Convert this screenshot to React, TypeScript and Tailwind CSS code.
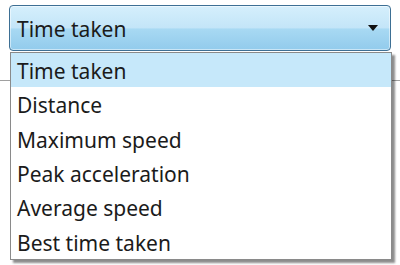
const items = ['Time taken', 'Distance', 'Maximum speed', 'Peak acceleration', 'Average speed', 'Best time taken'];

export default function App() {
  return (
    <div
      className="relative h-[265px] w-[400px] overflow-hidden bg-white text-[21px] text-[#1b1b1b]"
      style={{ fontFamily: '"Noto Sans", "Open Sans", sans-serif' }}
    >
      {/* faint separator behind the popup */}
      <div className="absolute left-0 right-0 top-[80px] h-px bg-[#a0a0a0]" />

      <div className="relative px-[9px] pt-[5px]">
        <div className="flex h-[46px] items-center justify-between rounded-[4px] border border-[#3d6f94] bg-[linear-gradient(to_bottom,#d5effc_0%,#c3e5f8_50%,#a8d9f3_52%,#92cbec_100%)] pl-[7px] pr-[10px] shadow-[inset_0_0_0_1px_rgba(255,255,255,0.5)]">
          <span className="pt-[3px] leading-none">Time taken</span>
          <svg width="10" height="6" viewBox="0 0 10 6" className="mr-[2px]">
            <path d="M0 0H10L5 6Z" fill="#111" />
          </svg>
        </div>
      </div>

      <div className="relative ml-[10px] mt-[1px] w-[382px] border border-[#8a8a8a] bg-white shadow-[3px_3px_2px_rgba(0,0,0,0.45)]">
        {items.map((item, i) => (
          <div
            key={item}
            className={`flex h-[34.3px] items-center pl-[6px] pt-[3px] leading-none ${i === 0 ? 'bg-[#c6e8fa]' : ''}`}
          >
            {item}
          </div>
        ))}
      </div>
    </div>
  );
}
